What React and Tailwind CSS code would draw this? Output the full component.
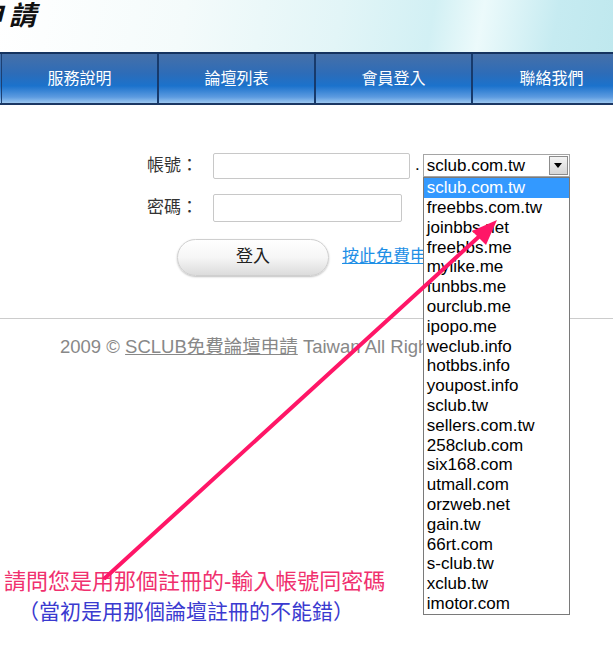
import React from 'react';

const domains = [
  'sclub.com.tw', 'freebbs.com.tw', 'joinbbs.net', 'freebbs.me', 'mylike.me', 'funbbs.me',
  'ourclub.me', 'ipopo.me', 'weclub.info', 'hotbbs.info', 'youpost.info', 'sclub.tw',
  'sellers.com.tw', '258club.com', 'six168.com', 'utmall.com', 'orzweb.net', 'gain.tw',
  '66rt.com', 's-club.tw', 'xclub.tw', 'imotor.com',
];

const navItems = ['服務說明', '論壇列表', '會員登入', '聯絡我們'];

const cjk = "font-['Liberation_Sans','Noto_Sans_CJK_TC',sans-serif]";

function DomainSelect() {
  return (
    <div className="relative w-[147px]">
      <div className="flex h-[23px] items-center border border-[#a5a5a5] bg-white pl-[3px] text-[17px] leading-none text-black">
        <span className="flex-1">sclub.com.tw</span>
        <span className="mr-px flex h-[19px] w-[19px] items-center justify-center border border-[#8c8c8c] bg-gradient-to-b from-[#f4f4f4] to-[#d6d6d6]">
          <span className="h-0 w-0 border-x-[4px] border-t-[5px] border-x-transparent border-t-black" />
        </span>
      </div>
      <ul className="absolute left-0 top-full z-10 w-[147px] border border-[#7a7a7a] bg-white text-[17px] leading-[19.8px] text-black">
        {domains.map((d, i) => (
          <li key={d} className={i === 0 ? 'bg-[#3399ff] pl-[3px] text-white' : 'pl-[3px]'}>
            {d}
          </li>
        ))}
      </ul>
    </div>
  );
}

export default function App() {
  return (
    <div className={`relative h-[647px] w-[613px] overflow-hidden bg-white ${cjk}`}>
      {/* banner */}
      <header className="h-[52px] overflow-hidden bg-[linear-gradient(100deg,#ffffff_0%,#f4fbfb_30%,#e2f5f7_55%,#d2f0f4_70%,#ecfafb_78%,#c6ebf1_90%,#bfe8ee_100%)]">
        <div className="ml-[-24px] pt-[3px] text-[27px] font-bold italic leading-none tracking-[6px] text-[#111]">
          申請
        </div>
      </header>

      {/* nav */}
      <nav className="flex h-[53px] overflow-hidden border-y-2 border-t-[#15335f] border-b-[#1b3763] bg-[linear-gradient(to_bottom,#4670a8_0%,#2d6cb8_40%,#1b72cc_65%,#5d9be0_88%,#9cc7f0_100%)]">
        <div className="w-[2px] shrink-0 border-r border-[#1c3f72]" />
        {navItems.map((item) => (
          <div key={item} className="flex w-[157px] shrink-0 items-center justify-center border-r-2 border-[#173a6c] text-[16px] text-white last:border-r-0">
            {item}
          </div>
        ))}
      </nav>

      {/* login form */}
      <form className="flex flex-col pt-[47px] text-[17px] text-[#333]">
        <div className="flex items-center">
          <label className="w-[198px] text-right">帳號：</label>
          <input className="ml-[15px] h-[26px] w-[197px] rounded-[2px] border border-[#c8c8c8] bg-white" />
          <span className="ml-[5px] mr-[3px] self-end pb-[2px] text-black">.</span>
          <DomainSelect />
        </div>
        <div className="mt-[14px] flex items-center">
          <label className="w-[198px] text-right">密碼：</label>
          <input type="password" className="ml-[15px] h-[28px] w-[189px] rounded-[2px] border border-[#c8c8c8] bg-white" />
        </div>
        <div className="mt-[17px] flex items-center">
          <button type="button" className="ml-[177px] h-[37px] w-[152px] rounded-full border border-[#cfcfcf] bg-gradient-to-b from-white via-[#f6f6f6] to-[#dcdcdc] text-[17px] text-[#222] shadow-[0_1px_2px_rgba(0,0,0,0.25)]">
            登入
          </button>
          <a href="#" className="ml-[13px] text-[17px] text-[#1e8fe6] underline">按此免費申請</a>
        </div>
      </form>

      <hr className="mt-[42px] border-t border-[#cccccc]" />

      <footer className="whitespace-nowrap pl-[60px] pt-[14px] text-[18.5px] text-[#888]">
        2009 © <span className="underline">SCLUB免費論壇申請</span> Taiwan All Rights Reserved
      </footer>

      {/* annotation */}
      <div className="mt-[207px] pl-[4px] leading-[30px]">
        <p className="text-[22px] text-[#f0306e]">請問您是用那個註冊的-輸入帳號同密碼</p>
        <p className="pl-[14px] text-[21px] text-[#3a3ad0]">（當初是用那個論壇註冊的不能錯）</p>
      </div>

      <svg className="pointer-events-none absolute left-0 top-0 z-20" width="613" height="647">
        <line x1="105" y1="578" x2="484" y2="232" stroke="#ff1667" strokeWidth="4" strokeLinecap="round" />
        <polygon points="497,220 472,231 486,245" fill="#ff1667" />
      </svg>
    </div>
  );
}
